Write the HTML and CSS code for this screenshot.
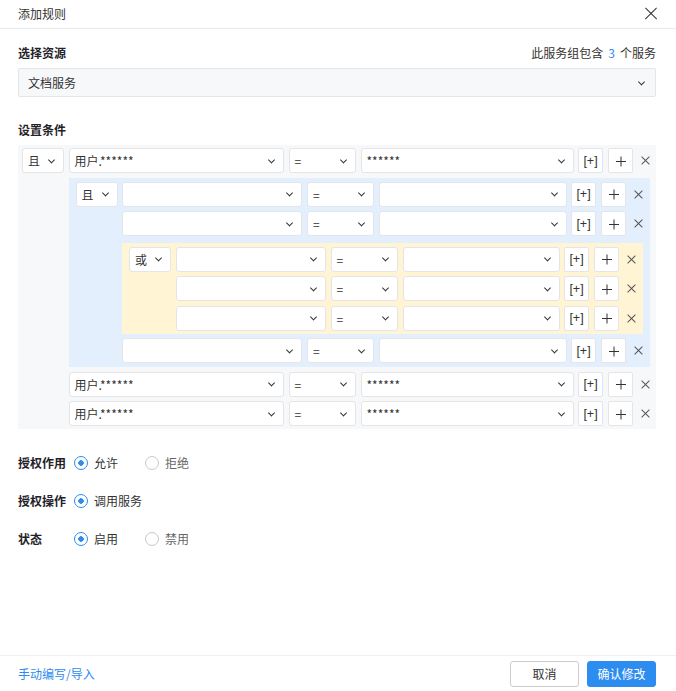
FILE: index.html
```html
<!DOCTYPE html>
<html lang="zh-CN">
<head>
<meta charset="utf-8">
<title>添加规则</title>
<link rel="stylesheet" href="styles.css">
</head>
<body>
<div class="modal">
  <div class="hd"><span class="title">添加规则</span><span class="close"></span></div>
  <div class="bd">
    <div class="sec-head"><span class="lbl">选择资源</span><span class="info">此服务组包含<span class="num">3</span>个服务</span></div>
    <div class="res-sel chev">文档服务</div>
    <div class="lbl cond-lbl">设置条件</div>

    <div class="grp g0">
      <div class="sel logic chev">且</div>
      <div class="rows">
        <div class="row">
          <div class="sel field chev">用户.******</div>
          <div class="sel op chev">=</div>
          <div class="sel val chev">******</div>
          <div class="sub">[+]</div><div class="add"></div><div class="del"></div>
        </div>

        <div class="grp g1">
          <div class="sel logic chev">且</div>
          <div class="rows">
            <div class="row">
              <div class="sel field chev"></div>
              <div class="sel op chev">=</div>
              <div class="sel val chev"></div>
              <div class="sub">[+]</div><div class="add"></div><div class="del"></div>
            </div>
            <div class="row">
              <div class="sel field chev"></div>
              <div class="sel op chev">=</div>
              <div class="sel val chev"></div>
              <div class="sub">[+]</div><div class="add"></div><div class="del"></div>
            </div>

            <div class="grp g2">
              <div class="sel logic chev">或</div>
              <div class="rows">
                <div class="row">
                  <div class="sel field chev"></div>
                  <div class="sel op chev">=</div>
                  <div class="sel val chev"></div>
                  <div class="sub">[+]</div><div class="add"></div><div class="del"></div>
                </div>
                <div class="row">
                  <div class="sel field chev"></div>
                  <div class="sel op chev">=</div>
                  <div class="sel val chev"></div>
                  <div class="sub">[+]</div><div class="add"></div><div class="del"></div>
                </div>
                <div class="row">
                  <div class="sel field chev"></div>
                  <div class="sel op chev">=</div>
                  <div class="sel val chev"></div>
                  <div class="sub">[+]</div><div class="add"></div><div class="del"></div>
                </div>
              </div>
            </div>

            <div class="row">
              <div class="sel field chev"></div>
              <div class="sel op chev">=</div>
              <div class="sel val chev"></div>
              <div class="sub">[+]</div><div class="add"></div><div class="del"></div>
            </div>
          </div>
        </div>

        <div class="row">
          <div class="sel field chev">用户.******</div>
          <div class="sel op chev">=</div>
          <div class="sel val chev">******</div>
          <div class="sub">[+]</div><div class="add"></div><div class="del"></div>
        </div>
        <div class="row">
          <div class="sel field chev">用户.******</div>
          <div class="sel op chev">=</div>
          <div class="sel val chev">******</div>
          <div class="sub">[+]</div><div class="add"></div><div class="del"></div>
        </div>
      </div>
    </div>

    <div class="opts">
      <div class="opt-row"><span class="lbl opt-lbl">授权作用</span><span class="radio on">允许</span><span class="radio off">拒绝</span></div>
      <div class="opt-row"><span class="lbl opt-lbl">授权操作</span><span class="radio on">调用服务</span></div>
      <div class="opt-row"><span class="lbl opt-lbl">状态</span><span class="radio on">启用</span><span class="radio off">禁用</span></div>
    </div>
  </div>
  <div class="ft">
    <span class="link">手动编写/导入</span>
    <div class="btns"><button class="btn btn-cancel">取消</button><button class="btn btn-ok">确认修改</button></div>
  </div>
</div>
</body>
</html>
```

FILE: styles.css
```css
* { box-sizing: border-box; }
body {
  margin: 0;
  font-family: "Noto Sans CJK SC", "Noto Sans", sans-serif;
  font-size: 12px;
  color: #333;
  background: #fff;
}
.modal {
  width: 676px;
  height: 691px;
  display: flex;
  flex-direction: column;
}
.hd {
  flex: none;
  height: 29px;
  border-bottom: 1px solid #e8eaec;
  display: flex;
  align-items: center;
  justify-content: space-between;
  padding: 0 19px 0 18px;
}
.title { color: #333; line-height: 1; }
.close { width: 12px; height: 12px; position: relative; }
.close::before, .close::after {
  content: "";
  position: absolute;
  left: -2px;
  top: 5.4px;
  width: 16px;
  height: 1.2px;
  background: #333;
  transform: rotate(45deg);
}
.close::after { transform: rotate(-45deg); }

.bd { flex: 1; padding: 0 20px 0 18px; }
.sec-head {
  margin-top: 13px;
  height: 20px;
  display: flex;
  justify-content: space-between;
  align-items: center;
}
.lbl { font-weight: 600; color: #1f2329; }
.info { color: #333; }
.num { color: #2d8cf0; margin: 0 5px; }

.chev { position: relative; }
.chev::after {
  content: "";
  position: absolute;
  right: 9px;
  top: 50%;
  width: 4px;
  height: 4px;
  border-right: 1.2px solid #333;
  border-bottom: 1.2px solid #333;
  transform: translateY(-70%) rotate(45deg);
}
.res-sel {
  margin-top: 6px;
  height: 29px;
  border: 1px solid #e3e5e8;
  background: #f7f8fa;
  border-radius: 2px;
  padding-left: 9px;
  display: flex;
  align-items: center;
}
.res-sel::after { right: 11px; }
.cond-lbl { margin-top: 23px; height: 20px; line-height: 20px; }

.grp { display: flex; align-items: flex-start; gap: 4.5px; }
.g0 { margin-top: 5px; background: #f7f8fa; padding: 3px 6px 3px 4px; --fw: 215px; }
.g1 { background: #e3effd; padding: 4px 7px; --fw: 180px; }
.g2 { background: #fff5d5; padding: 4px 7px 3px; margin-top: 2px; --fw: 150px; }
.rows { flex: 1; min-width: 0; display: flex; flex-direction: column; gap: 4.5px; }
.row { display: flex; align-items: center; height: 25px; gap: 5px; }

.sel {
  flex: none;
  height: 25px;
  border: 1px solid #e3e5e8;
  border-radius: 3px;
  background: #fff;
  padding: 0 18px 0 5px;
  display: flex;
  align-items: center;
  white-space: nowrap;
  color: #333;
}
.logic { width: 42px; }
.field { width: var(--fw); }
.op { width: 67px; }
.val { flex: 1; min-width: 0; }

.sub, .add {
  flex: none;
  width: 25px;
  height: 25px;
  border: 1px solid #e3e5e8;
  border-radius: 2px;
  background: #fff;
  display: flex;
  align-items: center;
  justify-content: center;
  color: #333;
}
.sub {
  margin-left: -1px;
  font-family: "Liberation Sans", Arial, sans-serif;
  font-size: 12.5px;
}
.add { position: relative; }
.add::before, .add::after {
  content: "";
  position: absolute;
  left: 7px;
  top: 11.5px;
  width: 10px;
  height: 1px;
  background: #333;
}
.add::after { transform: rotate(90deg); }
.del { flex: none; width: 10px; height: 10px; margin-left: 2px; position: relative; }
.del::before, .del::after {
  content: "";
  position: absolute;
  left: -0.5px;
  top: 4.5px;
  width: 11px;
  height: 1px;
  background: #555;
  transform: rotate(45deg);
}
.del::after { transform: rotate(-45deg); }

.opts { margin-top: 23.5px; display: flex; flex-direction: column; gap: 18px; }
.opt-row { display: flex; align-items: center; height: 20px; }
.opt-lbl { width: 56px; }
.radio { display: flex; align-items: center; gap: 6px; margin-right: 27px; color: #333; }
.radio::before {
  content: "";
  width: 12px;
  height: 12px;
  border: 1px solid #c5c8ce;
  border-radius: 50%;
}
.radio.on::before {
  border-color: #2d8cf0;
  background: radial-gradient(circle, #2d8cf0 2.5px, transparent 3px);
}
.radio.off { color: #666; }

.ft {
  flex: none;
  height: 36px;
  border-top: 1px solid #eef0f3;
  display: flex;
  align-items: center;
  justify-content: space-between;
  padding: 0 20px 0 18px;
}
.link { color: #2d8cf0; }
.btns { display: flex; gap: 8px; }
.btn {
  width: 69px;
  height: 26px;
  border-radius: 3px;
  font-family: inherit;
  font-size: 12px;
  padding: 0;
}
.btn-cancel { background: #fff; border: 1px solid #c8ccd2; color: #333; }
.btn-ok { background: #2d8cf0; border: 1px solid #2d8cf0; color: #fff; }
```
